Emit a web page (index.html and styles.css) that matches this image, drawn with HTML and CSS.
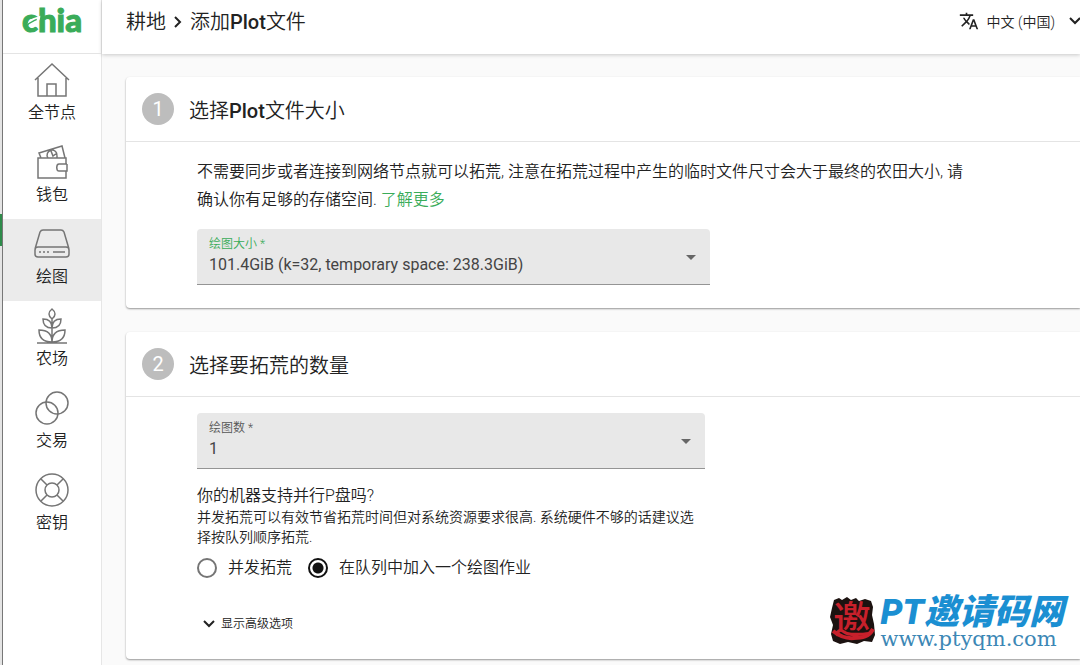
FILE: index.html
```html
<!DOCTYPE html>
<html lang="zh-CN">
<head>
  <meta charset="UTF-8">
  <meta name="viewport" content="width=device-width, initial-scale=1.0">
  <title>Chia - 添加Plot文件</title>
  <link rel="stylesheet" href="styles.css">
</head>
<body>
  <div class="edge"><span class="edge-mark"></span></div>

  <aside class="sidebar">
    <a href="#" class="logo">
      chia
      <svg class="leaf" viewBox="0 0 20 16" aria-hidden="true">
        <path d="M3 12C3 6 9 5 17 2C17 9 12 13 6 12Z" fill="#fff"/>
        <path d="M1 14C5 9 9 8 13 6" fill="none" stroke="#3aac59" stroke-width="1.5"/>
      </svg>
    </a>
    <nav class="menu">
      <a href="#" class="menu-item">
        <svg viewBox="0 0 36 36"><path d="M1 18L18 2L35 18M4 16V34H32V16M13 34V22H22V34"/></svg>
        全节点
      </a>
      <a href="#" class="menu-item">
        <svg viewBox="0 0 36 36"><path d="M32 20V14H4V34H32V27M33 20H25C22 20 22 27 25 27H33V20M7 14L5 9L28 2L31 14M14 14A5 5 0 1 1 23 12V14M17 7L19 12L23 9"/></svg>
        钱包
      </a>
      <a href="#" class="menu-item active">
        <svg viewBox="0 0 36 36"><path d="M1 23L6 6Q7 4 9 4H27Q29 4 30 6L35 23M4 21H32Q35 21 35 24V28Q35 31 32 31H4Q1 31 1 28V24Q1 21 4 21Z"/><path d="M5 26H7M9 26H11M13 26H15M19 26H31"/></svg>
        绘图
      </a>
      <a href="#" class="menu-item">
        <svg viewBox="0 0 36 36"><path d="M3 35H33M18 35V10M18 1C14 4 14 8 18 11C22 8 22 4 18 1ZM18 20C11 20 9 16 9 11C15 11 18 14 18 20C18 14 21 11 27 11C27 16 25 20 18 20M18 34C9 34 5 29 5 22C13 22 18 26 18 34C18 26 23 22 31 22C31 29 27 34 18 34"/></svg>
        农场
      </a>
      <a href="#" class="menu-item">
        <svg viewBox="0 0 36 36"><circle cx="23" cy="13" r="11"/><circle cx="13" cy="23" r="11"/></svg>
        交易
      </a>
      <a href="#" class="menu-item">
        <svg viewBox="0 0 36 36"><circle cx="18" cy="18" r="16"/><circle cx="18" cy="18" r="7"/><path d="M7 7L13 13M29 7L23 13M7 29L13 23M29 29L23 23"/></svg>
        密钥
      </a>
    </nav>
  </aside>

  <div class="page">
    <header class="topbar">
      <div class="breadcrumb">
        <a href="#">耕地</a>
        <svg class="chevron" viewBox="0 0 10 12"><path d="M2 1L7 6L2 11"/></svg>
        <span>添加<b>Plot</b>文件</span>
      </div>
      <button type="button" class="language">
        <svg class="translate" viewBox="0 0 24 24"><path d="M12.87 15.07l-2.54-2.51.03-.03A17.52 17.52 0 0 0 14.07 6H17V4h-7V2H8v2H1v2h11.17C11.5 7.92 10.44 9.75 9 11.35 8.07 10.32 7.3 9.19 6.69 8h-2c.73 1.63 1.73 3.17 2.98 4.56l-5.09 5.02L4 19l5-5 3.11 3.11.76-2.04zM18.5 10h-2L12 22h2l1.12-3h4.75L21 22h2l-4.5-12zm-2.62 7l1.62-4.33L19.12 17h-3.24z"/></svg>
        <span>中文 (中国)</span>
        <svg class="chevron-down" viewBox="0 0 12 8"><path d="M1 1L6 6L11 1"/></svg>
      </button>
    </header>

    <main class="content">
      <section class="card">
        <div class="card-header">
          <span class="step">1</span>
          <h2>选择<b>Plot</b>文件大小</h2>
        </div>
        <div class="card-body">
          <p class="intro">不需要同步或者连接到网络节点就可以拓荒, 注意在拓荒过程中产生的临时文件尺寸会大于最终的农田大小, 请确认你有足够的存储空间. <a href="#">了解更多</a></p>
          <div class="field field-size">
            <label for="plotSize" class="focused">绘图大小 *</label>
            <select id="plotSize">
              <option>101.4GiB (k=32, temporary space: 238.3GiB)</option>
            </select>
          </div>
        </div>
      </section>

      <section class="card">
        <div class="card-header">
          <span class="step">2</span>
          <h2>选择要拓荒的数量</h2>
        </div>
        <div class="card-body">
          <div class="field">
            <label for="plotCount">绘图数 *</label>
            <select id="plotCount">
              <option>1</option>
            </select>
          </div>
          <div class="question">
            <h3>你的机器支持并行P盘吗?</h3>
            <p>并发拓荒可以有效节省拓荒时间但对系统资源要求很高. 系统硬件不够的话建议选择按队列顺序拓荒.</p>
          </div>
          <div class="radios">
            <label><input type="radio" name="parallel">并发拓荒</label>
            <label><input type="radio" name="parallel" checked>在队列中加入一个绘图作业</label>
          </div>
          <button type="button" class="advanced">
            <svg class="chevron-down" viewBox="0 0 12 8"><path d="M1 1L6 6L11 1"/></svg>
            显示高级选项
          </button>
        </div>
      </section>
    </main>
  </div>

  <div class="watermark">
    <svg class="seal" viewBox="0 0 46 48">
      <path d="M4 3L9 1L12 3L17 0L21 3L26 1L29 4L35 2L41 4L43 10L42 18L44 27L45 38L42 45L34 44L27 47L18 45L10 47L3 44L1 37L3 28L0 20L2 11Z" fill="#1c1210"/>
      <text x="3" y="36" class="seal-text">邀</text>
      <path d="M3 34C8 38 14 42 24 41C32 41 39 40 43 32" fill="none" stroke="#c8202b" stroke-width="4"/>
    </svg>
    <div class="watermark-text">
      <strong>PT邀请码网</strong>
      <span>www.ptyqm.com</span>
    </div>
  </div>
</body>
</html>
```
FILE: styles.css
```css
* {
  box-sizing: border-box;
}

body {
  display: flex;
  margin: 0;
  min-height: 100vh;
  overflow: hidden;
  background: #fafafa;
  color: #222;
  font-family: Roboto, "Noto Sans CJK SC", sans-serif;
  font-size: 16px;
  font-weight: 350;
}

a {
  color: inherit;
  text-decoration: none;
}

h2, h3, p {
  margin: 0;
  font-weight: 350;
}

b {
  font-weight: 500;
}

button, select {
  border: none;
  color: inherit;
  font-family: inherit;
}

/* edge of the window behind */
.edge {
  flex: 0 0 3px;
  padding-top: 214px;
  background: #e4e4e4;
  border-right: 1px solid #777;
}

.edge-mark {
  display: block;
  height: 32px;
  background: #2e8b4a;
}

.sidebar {
  flex: 0 0 99px;
  background: #fff;
  border-right: 1px solid #e6e6e6;
}

.logo {
  position: relative;
  display: block;
  height: 54px;
  margin-bottom: 1px;
  border-bottom: 1px solid #e4e4e4;
  color: #3aac59;
  font-family: Lato, sans-serif;
  font-size: 33px;
  font-weight: 900;
  line-height: 38px;
  text-align: center;
  -webkit-text-stroke: 1px #3aac59;
}

.leaf {
  position: absolute;
  left: 22px;
  top: 14px;
  width: 18px;
}

.menu-item {
  display: flex;
  flex-direction: column;
  align-items: center;
  gap: 4px;
  height: 82px;
  padding-top: 7px;
  line-height: 22px;
}

.menu-item.active {
  background: #ebebeb;
}

.menu-item svg {
  width: 36px;
  height: 36px;
  fill: none;
  stroke: #757575;
  stroke-width: 1.5;
}

.page {
  flex: 1;
  min-width: 0;
}

.topbar {
  display: flex;
  justify-content: space-between;
  align-items: flex-start;
  height: 54px;
  padding: 8px 0 0 24px;
  background: #fff;
  box-shadow: 0 1px 4px rgba(0, 0, 0, 0.2);
}

.breadcrumb {
  display: flex;
  align-items: center;
  gap: 7px;
  font-size: 20px;
  line-height: 28px;
}

.chevron {
  width: 10px;
  fill: none;
  stroke: #222;
  stroke-width: 2;
}

.chevron-down {
  width: 12px;
  fill: none;
  stroke: #222;
  stroke-width: 2;
}

.language {
  display: flex;
  align-items: center;
  gap: 8px;
  height: 26px;
  margin-right: -1px;
  padding: 0;
  background: none;
  font-size: 14px;
  font-weight: 350;
}

.language .chevron-down {
  margin-left: 6px;
}

.translate {
  width: 20px;
  fill: #222;
}

.content {
  display: flex;
  flex-direction: column;
  gap: 24px;
  padding: 23px 0 0 24px;
}

.card {
  background: #fff;
  border-radius: 4px 0 0 4px;
  box-shadow: 0 1px 2px rgba(0, 0, 0, 0.4);
}

.card-header {
  display: flex;
  align-items: center;
  gap: 15px;
  height: 65px;
  padding: 0 16px;
  border-bottom: 1px solid #e4e4e4;
}

.card-header h2 {
  font-size: 20px;
}

.step {
  width: 32px;
  height: 32px;
  border-radius: 50%;
  background: #bdbdbd;
  color: #fff;
  font-size: 20px;
  font-weight: 400;
  line-height: 32px;
  text-align: center;
}

.card-body {
  padding: 16px 24px 23px 71px;
}

.intro {
  max-width: 776px;
  margin-bottom: 15px;
  line-height: 28px;
}

.intro a {
  color: #3aac59;
}

.field {
  position: relative;
  max-width: 508px;
}

.field-size {
  max-width: 513px;
}

.field label {
  position: absolute;
  left: 12px;
  top: 6px;
  color: #555;
  font-size: 12px;
  line-height: 18px;
}

.field label.focused {
  color: #3aac59;
}

.field select {
  display: block;
  width: 100%;
  height: 56px;
  padding: 22px 32px 6px 12px;
  appearance: none;
  background: #e8e8e8;
  border-bottom: 1px solid #949494;
  border-radius: 4px 4px 0 0;
  color: #444;
  font-size: 16px;
}

.field::after {
  content: "";
  position: absolute;
  right: 14px;
  top: 26px;
  border: 5px solid transparent;
  border-top-color: #666;
  border-bottom: none;
}

.question {
  max-width: 508px;
  padding-top: 16px;
}

.question h3 {
  font-size: 16px;
  line-height: 22px;
}

.question p {
  font-size: 14px;
  line-height: 20px;
}

.radios {
  display: flex;
  gap: 16px;
  padding-top: 9px;
}

.radios label {
  display: flex;
  align-items: center;
  gap: 11px;
  line-height: 24px;
}

.radios input {
  width: 20px;
  height: 20px;
  margin: 0;
  appearance: none;
  border: 2px solid #757575;
  border-radius: 50%;
}

.radios input:checked {
  border-color: #111;
  background: radial-gradient(circle, #111 5px, transparent 6px);
}

.advanced {
  display: flex;
  align-items: center;
  gap: 6px;
  margin-top: 32px;
  padding: 0 6px;
  background: none;
  font-size: 12px;
  font-weight: 350;
  line-height: 24px;
}

.watermark {
  position: absolute;
  right: 16px;
  bottom: 17px;
  display: flex;
  align-items: flex-end;
  gap: 4px;
}

.seal {
  width: 46px;
  height: 54px;
}

.seal-text {
  fill: #c8202b;
  font-size: 38px;
  font-weight: 500;
}

.watermark-text {
  color: #1b8fd2;
}

.watermark-text strong {
  display: block;
  font-size: 35px;
  font-style: italic;
  font-weight: 900;
  line-height: 34px;
}

.watermark-text span {
  display: block;
  color: #3c87b5;
  font-family: "DejaVu Serif", serif;
  font-size: 21px;
  line-height: 18px;
}
```
